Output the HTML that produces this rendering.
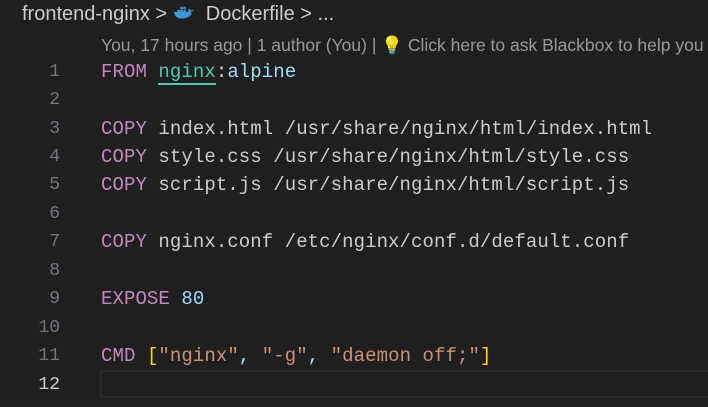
<!DOCTYPE html>
<html><head><style>
body{margin:0;width:708px;height:407px;background:#1f1f1f;overflow:hidden;position:relative;font-family:"Liberation Mono",monospace}
.bc{position:absolute;left:22px;top:3px;font:20px "Liberation Sans",sans-serif;color:#cccccc;white-space:nowrap}
.lens{position:absolute;left:101px;top:35px;font:17.5px "Liberation Sans",sans-serif;color:#999999;white-space:nowrap}
.ln{position:absolute;width:60px;text-align:right;left:0;font-size:18px;color:#6e7681}
.code{position:absolute;left:101px;font-size:19px;color:#cccccc;white-space:pre;letter-spacing:0.08px}
.k{color:#c586c0}.t{color:#4ec9b0}.v{color:#9cdcfe}.s{color:#ce9178}.n{color:#b5cea8}.b{color:#ffd700}.p{color:#cccccc}
.cur{position:absolute;left:100px;top:370px;width:620px;height:28px;border:2px solid #282828;box-sizing:border-box}
</style></head><body>
<div class="bc">frontend-nginx &gt; <svg width="22" height="16" viewBox="0 0 20 14" style="vertical-align:-1px"><path d="M1 7h15c1-2 3-2 3-2-1-1-2-1-3 0 0-1-1-2-1-2-1 1-1 2-1 3H1c0 4 3 6 7 6 5 0 8-2 9-5" fill="#3a9ad9"/><rect x="4" y="4" width="2.2" height="2.2" fill="#3a9ad9"/><rect x="6.7" y="4" width="2.2" height="2.2" fill="#3a9ad9"/><rect x="9.4" y="4" width="2.2" height="2.2" fill="#3a9ad9"/><rect x="6.7" y="1.3" width="2.2" height="2.2" fill="#3a9ad9"/><rect x="9.4" y="1.3" width="2.2" height="2.2" fill="#3a9ad9"/></svg>&nbsp; Dockerfile &gt; ...</div>
<div class="lens">You, 17 hours ago | 1 author (You) | <span style="color:#f0c040">💡</span> Click here to ask Blackbox to help you</div>
<div class="cur"></div>
<div class="ln" style="top:62px">1</div>
<div class="ln" style="top:90px">2</div>
<div class="ln" style="top:119px">3</div>
<div class="ln" style="top:147px">4</div>
<div class="ln" style="top:175px">5</div>
<div class="ln" style="top:204px">6</div>
<div class="ln" style="top:232px">7</div>
<div class="ln" style="top:261px">8</div>
<div class="ln" style="top:289px">9</div>
<div class="ln" style="top:318px">10</div>
<div class="ln" style="top:346px">11</div>
<div class="ln" style="top:375px;color:#cccccc">12</div>
<div class="code" style="top:61px"><span class="k">FROM</span> <span class="t" style="border-bottom:2px solid #4ec9b0">nginx</span>:<span class="v">alpine</span></div>
<div class="code" style="top:118px"><span class="k">COPY</span> index.html /usr/share/nginx/html/index.html</div>
<div class="code" style="top:146px"><span class="k">COPY</span> style.css /usr/share/nginx/html/style.css</div>
<div class="code" style="top:174px"><span class="k">COPY</span> script.js /usr/share/nginx/html/script.js</div>
<div class="code" style="top:231px"><span class="k">COPY</span> nginx.conf /etc/nginx/conf.d/default.conf</div>
<div class="code" style="top:288px"><span class="k">EXPOSE</span> <span class="v">80</span></div>
<div class="code" style="top:345px"><span class="k">CMD</span> <span class="b">[</span><span class="s">"nginx"</span><span class="v">,</span> <span class="s">"-g"</span><span class="v">,</span> <span class="s">"daemon off;"</span><span class="b">]</span></div>
</body></html>
